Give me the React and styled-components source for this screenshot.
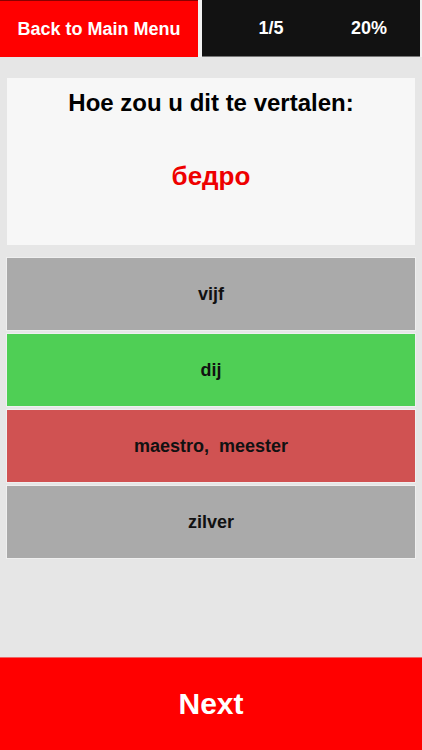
import React from "react";
import styled, { createGlobalStyle } from "styled-components";

const Global = createGlobalStyle`
  html, body { margin: 0; padding: 0; }
  body { background: #e6e6e6; font-family: "Liberation Sans", Arial, Helvetica, sans-serif; }
`;

const Screen = styled.div`
  height: 100vh;
  display: flex;
  flex-direction: column;
  background: #e6e6e6;
  overflow: hidden;
`;

const Header = styled.header`
  display: flex;
  height: 57px;
  flex-shrink: 0;
  background: #f2f2f2;
  box-sizing: border-box;
`;

const BackButton = styled.button`
  width: 198px;
  margin-right: 4px;
  border: none;
  border-top: 1px solid #8a0000;
  background: #ff0000;
  color: #fff;
  font-family: inherit;
  font-weight: bold;
  font-size: 18px;
  padding: 0;
  cursor: pointer;
`;

const Stats = styled.div`
  flex: 1;
  margin-right: 2px;
  background: #121212;
  border-bottom: 1px solid #777;
  display: grid;
  grid-template-columns: 1fr 1fr;
  padding: 0 2px 0 20px;
  align-items: center;
`;

const Stat = styled.span`
  color: #fff;
  font-weight: bold;
  font-size: 18px;
  text-align: center;
`;

const QuestionCard = styled.section`
  margin: 21px 7px 0;
  height: 167px;
  background: #f7f7f7;
  box-sizing: border-box;
  padding-top: 11px;
  text-align: center;
`;

const Prompt = styled.div`
  font-size: 24px;
  line-height: 28px;
  font-weight: bold;
  color: #000;
`;

const Word = styled.div`
  margin-top: 44px;
  font-size: 26px;
  line-height: 30px;
  font-weight: bold;
  color: #ee0000;
`;

const Options = styled.div`
  margin: 12px 6px 0;
  display: flex;
  flex-direction: column;
  gap: 2px;
`;

const optionColors = {
  neutral: "#aaaaaa",
  correct: "#4fcf55",
  wrong: "#d05252",
};

const Option = styled.button`
  height: 74px;
  box-sizing: border-box;
  border: 1px solid #efefef;
  background: ${(p) => optionColors[p.$state]};
  color: #111;
  font-family: inherit;
  font-weight: bold;
  font-size: 18px;
  white-space: pre;
  cursor: pointer;
  padding: 0;
`;

const Spacer = styled.div`
  flex: 1;
`;

const NextButton = styled.button`
  height: 93px;
  flex-shrink: 0;
  border: none;
  border-top: 1px solid #e66;
  background: #ff0000;
  color: #fff;
  font-family: inherit;
  font-weight: bold;
  font-size: 30px;
  cursor: pointer;
`;

const options = [
  { label: "vijf", state: "neutral" },
  { label: "dij", state: "correct" },
  { label: "maestro,  meester", state: "wrong" },
  { label: "zilver", state: "neutral" },
];

export default function App() {
  return (
    <>
      <Global />
      <Screen>
        <Header>
          <BackButton>Back to Main Menu</BackButton>
          <Stats>
            <Stat>1/5</Stat>
            <Stat>20%</Stat>
          </Stats>
        </Header>
        <QuestionCard>
          <Prompt>Hoe zou u dit te vertalen:</Prompt>
          <Word>бедро</Word>
        </QuestionCard>
        <Options>
          {options.map((o) => (
            <Option key={o.label} $state={o.state}>
              {o.label}
            </Option>
          ))}
        </Options>
        <Spacer />
        <NextButton>Next</NextButton>
      </Screen>
    </>
  );
}
